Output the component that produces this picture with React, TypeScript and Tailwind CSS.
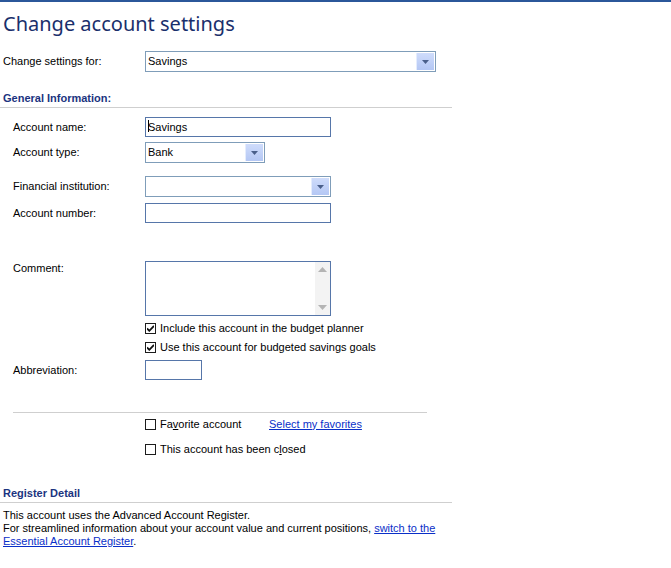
import React from 'react'

const Arrow = ({ color = '#4a5f8a' }: { color?: string }) => (
  <svg width="7" height="4" viewBox="0 0 7 4">
    <path d="M0 0h7L3.5 4z" fill={color} />
  </svg>
)

function Select({ value = '', width }: { value?: string; width: string }) {
  return (
    <div className={`flex h-[21px] ${width} border border-[#7f9db9] bg-white`}>
      <div className="flex-1 pl-[2px] flex items-center text-black">{value}</div>
      <div className="w-[18px] m-[1px] flex items-center justify-center bg-gradient-to-b from-[#cfdcfb] to-[#b4c7f4] border-l border-[#e4ecfd]">
        <Arrow />
      </div>
    </div>
  )
}

function Input({ width, height = 'h-[20px]', children }: { width: string; height?: string; children?: React.ReactNode }) {
  return (
    <div className={`${width} ${height} border border-[#5676a9] bg-white flex items-center pl-[2px] text-black`}>
      {children}
    </div>
  )
}

function Check({ checked }: { checked?: boolean }) {
  return (
    <div className="w-[11px] h-[11px] border border-[#1c1c1c] bg-white flex items-center justify-center shrink-0">
      {checked && (
        <svg width="7" height="7" viewBox="0 0 7 7">
          <path d="M0 3.5l2.3 2.3L7 1" stroke="#111" strokeWidth="1.8" fill="none" />
        </svg>
      )}
    </div>
  )
}

function Row({ label, indent = true, className = '', children }: { label?: string; indent?: boolean; className?: string; children?: React.ReactNode }) {
  return (
    <div className={`flex items-center ${indent ? 'pl-[13px]' : 'pl-[3px]'} ${className}`}>
      <div className={indent ? 'w-[132px]' : 'w-[142px]'}>{label}</div>
      {children}
    </div>
  )
}

export default function App() {
  return (
    <div className="w-[671px] h-[568px] bg-white border-t-2 border-[#2b579a] font-['Liberation_Sans',Arial,sans-serif] text-[11px] text-black leading-[13px] overflow-hidden">
      {/* Title */}
      <div className="h-[42px] flex items-center pl-[3px] font-['Noto_Sans',sans-serif] text-[20px] text-[#1a2f6c]">
        Change account settings
      </div>

      <Row label="Change settings for:" indent={false} className="mt-[7px]">
        <Select value="Savings" width="w-[291px]" />
      </Row>

      {/* General Information */}
      <div className="mt-[17px] h-[19px] w-[452px] border-b border-[#cfcfcf] pl-[3px] flex items-center font-bold text-[#1b3480]">
        General Information:
      </div>

      <Row label="Account name:" className="mt-[9px]">
        <Input width="w-[186px]">
          <span className="inline-block w-px h-[12px] bg-black -mr-px -mt-[3px]" />
          Savings
        </Input>
      </Row>
      <Row label="Account type:" className="mt-[5px]">
        <Select value="Bank" width="w-[120px]" />
      </Row>
      <Row label="Financial institution:" className="mt-[13px]">
        <Select width="w-[186px]" />
      </Row>
      <Row label="Account number:" className="mt-[6px]">
        <Input width="w-[186px]" />
      </Row>

      {/* Comment */}
      <div className="flex items-start pl-[13px] mt-[38px]">
        <div className="w-[132px] pt-[1px]">Comment:</div>
        <div className="w-[186px] h-[55px] border border-[#5676a9] bg-white flex justify-end">
          <div className="w-[15px] bg-[#f3f3f3] flex flex-col items-center justify-between py-[5px]">
            <svg width="9" height="5" viewBox="0 0 9 5"><path d="M4.5 0L9 5H0z" fill="#b4b4b4" /></svg>
            <svg width="9" height="5" viewBox="0 0 9 5"><path d="M0 0h9L4.5 5z" fill="#b4b4b4" /></svg>
          </div>
        </div>
      </div>

      <div className="flex items-center gap-[4px] pl-[145px] mt-[5px] h-[14px]">
        <Check checked />
        <span>Include this account in the budget planner</span>
      </div>
      <div className="flex items-center gap-[4px] pl-[145px] mt-[5px] h-[14px]">
        <Check checked />
        <span>Use this account for budgeted savings goals</span>
      </div>

      <Row label="Abbreviation:" className="mt-[6px]">
        <Input width="w-[57px]" height="h-[20px]" />
      </Row>

      <div className="ml-[13px] mt-[32px] w-[414px] h-px bg-[#cfcfcf]" />

      <div className="flex items-center pl-[145px] mt-[4px] h-[14px]">
        <Check />
        <span className="ml-[4px] w-[109px]">
          Fa<span className="underline">v</span>orite account
        </span>
        <a className="text-[#0a2fc8] underline">Select my favorites</a>
      </div>
      <div className="flex items-center gap-[4px] pl-[145px] mt-[11px] h-[14px]">
        <Check />
        <span>
          This account has been c<span className="underline">l</span>osed
        </span>
      </div>

      {/* Register Detail */}
      <div className="mt-[29px] h-[18px] w-[452px] border-b border-[#cfcfcf] pl-[3px] flex items-center font-bold text-[#1b3480]">
        Register Detail
      </div>
      <div className="pl-[3px] mt-[6px]">
        <div>This account uses the Advanced Account Register.</div>
        <div>
          For streamlined information about your account value and current positions,{' '}
          <a className="text-[#0a2fc8] underline">switch to the</a>
        </div>
        <div>
          <a className="text-[#0a2fc8] underline">Essential Account Register</a>.
        </div>
      </div>
    </div>
  )
}
